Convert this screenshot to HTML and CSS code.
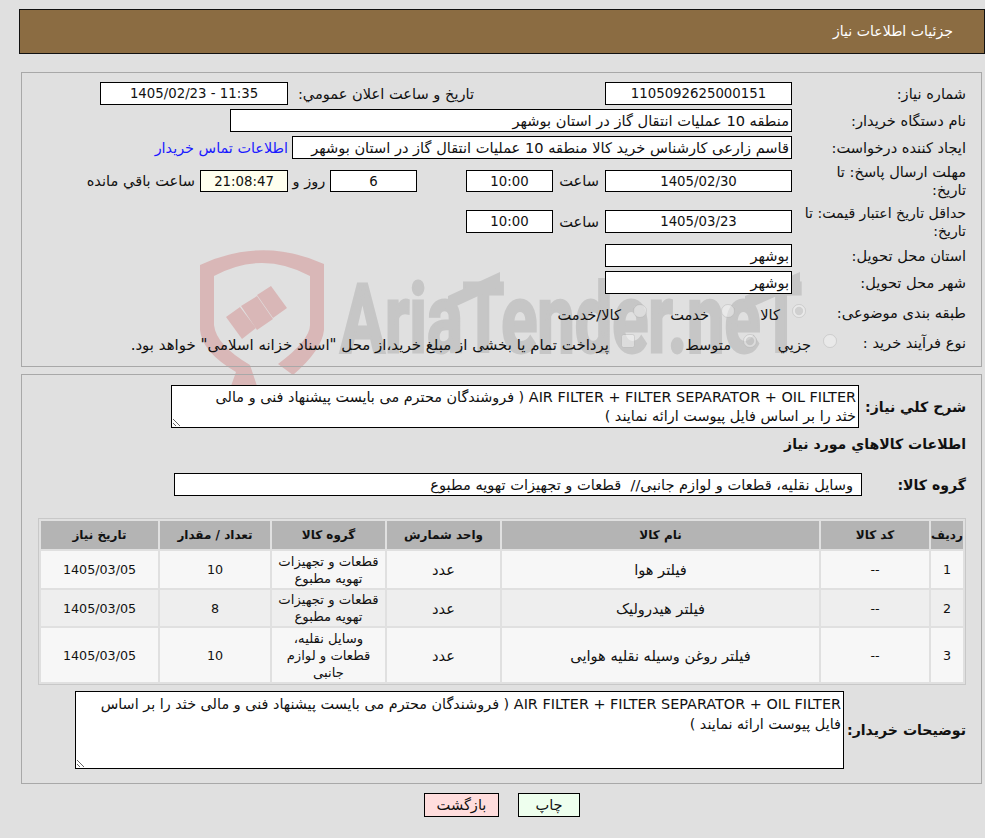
FILE: index.html
```html
<!DOCTYPE html>
<html lang="fa" dir="rtl">
<head>
<meta charset="utf-8">
<title>جزئیات اطلاعات نیاز</title>
<link rel="stylesheet" href="styles.css">
</head>
<body>
<div class="page">
  <svg class="watermark" width="985" height="420" viewBox="0 0 985 420" aria-hidden="true">
    <path class="wm-shield" fill-rule="evenodd" d="M200 265 Q262 236 324 264 L324 330 Q322 350 293 375 L278 364 Q310 340 310 325 L310 276 Q262 250 214 276 L214 325 Q216 345 250 365 L257 386 L231 386 L236 372 Q202 352 200 330 Z"/>
    <polygon class="wm-shield" points="226,317 240,307 256,328 242,339"/>
    <polygon class="wm-shield" points="241,306 257,296 273,319 257,330"/>
    <polygon class="wm-shield" points="257,295 271,286 287,308 273,318"/>
    <text class="wm-text" x="340" y="352" textLength="462" lengthAdjust="spacingAndGlyphs" direction="ltr">AriaTender.neT</text>
    <polygon class="wm-fill" points="448,296 500,272 500,286 448,310"/>
    <polygon class="wm-fill" points="745,296 800,272 800,286 745,310"/>
  </svg>

  <header class="title-bar">جزئیات اطلاعات نیاز</header>

  <section class="panel panel-info">
    <div class="row row-h23">
      <div class="label">شماره نیاز:</div>
      <div class="box box-main center num">1105092625000151</div>
      <div class="side-label w-announce">تاریخ و ساعت اعلان عمومي:</div>
      <div class="box box-announce center num ltr">1405/02/23 - 11:35</div>
    </div>
    <div class="row row-h23">
      <div class="label">نام دستگاه خریدار:</div>
      <div class="box box-buyer">منطقه 10 عملیات انتقال گاز در استان بوشهر</div>
    </div>
    <div class="row row-h23">
      <div class="label">ایجاد کننده درخواست:</div>
      <div class="box box-creator">قاسم زارعی کارشناس خرید کالا منطقه 10 عملیات انتقال گاز در استان بوشهر</div>
      <a class="contact" href="#">اطلاعات تماس خریدار</a>
    </div>
    <div class="row row-h36">
      <div class="label">مهلت ارسال پاسخ: تا تاریخ:</div>
      <div class="box box-main box-h22 center num">1405/02/30</div>
      <div class="hour-label">ساعت</div>
      <div class="box box-hour box-h22 center num">10:00</div>
      <div class="box box-days box-h22 center num">6</div>
      <div class="days-label">روز و</div>
      <div class="box box-timer box-h22 center num">21:08:47</div>
      <div class="remain-label">ساعت باقي مانده</div>
    </div>
    <div class="row row-h37">
      <div class="label label-tight">حداقل تاریخ اعتبار قیمت: تا تاریخ:</div>
      <div class="box box-main center num">1405/03/23</div>
      <div class="hour-label">ساعت</div>
      <div class="box box-hour center num">10:00</div>
    </div>
    <div class="row row-h23">
      <div class="label">استان محل تحویل:</div>
      <div class="box box-main">بوشهر</div>
    </div>
    <div class="row row-h23">
      <div class="label">شهر محل تحویل:</div>
      <div class="box box-main">بوشهر</div>
    </div>
    <div class="row row-h30">
      <div class="label label-cat">طبقه بندی موضوعی:</div>
      <label class="choice w71"><input type="radio" name="cat" disabled checked><span>کالا</span></label>
      <label class="choice w88"><input type="radio" name="cat" disabled><span>خدمت</span></label>
      <label class="choice"><input type="radio" name="cat" disabled><span>کالا/خدمت</span></label>
    </div>
    <div class="row row-h22">
      <div class="label label-proc">نوع فرآیند خرید :</div>
      <label class="choice w80"><input type="radio" name="proc" disabled><span>جزیي</span></label>
      <label class="choice w122"><input type="radio" name="proc" disabled checked><span>متوسط</span></label>
      <label class="choice"><input type="checkbox" disabled><span class="treasury">پرداخت تمام یا بخشی از مبلغ خرید،از محل "اسناد خزانه اسلامی" خواهد بود.</span></label>
    </div>
  </section>

  <section class="panel panel-goods">
    <div class="row">
      <div class="label-bold w107">شرح کلي نیاز:</div>
      <textarea class="note note-summary" readonly>AIR FILTER + FILTER SEPARATOR + OIL FILTER ( فروشندگان محترم می بایست پیشنهاد فنی و مالی خثد را بر اساس فایل پیوست ارائه نمایند )</textarea>
    </div>
    <h2 class="goods-title">اطلاعات کالاهاي مورد نیاز</h2>
    <div class="row group-row">
      <div class="label-bold w104">گروه کالا:</div>
      <div class="box box-group">وسایل نقلیه، قطعات و لوازم جانبی//&nbsp; قطعات و تجهیزات تهویه مطبوع</div>
    </div>
    <table class="goods">
      <thead>
        <tr>
          <th class="c-idx">ردیف</th><th class="c-code">کد کالا</th><th class="c-name">نام کالا</th><th class="c-unit">واحد شمارش</th><th class="c-group">گروه کالا</th><th class="c-qty">تعداد / مقدار</th><th>تاریخ نیاز</th>
        </tr>
      </thead>
      <tbody>
        <tr class="r1"><td class="d">1</td><td class="d">--</td><td>فیلتر هوا</td><td>عدد</td><td class="g">قطعات و تجهیزات تهویه مطبوع</td><td class="d">10</td><td class="d">1405/03/05</td></tr>
        <tr class="r2"><td class="d">2</td><td class="d">--</td><td>فیلتر هیدرولیک</td><td>عدد</td><td class="g">قطعات و تجهیزات تهویه مطبوع</td><td class="d">8</td><td class="d">1405/03/05</td></tr>
        <tr class="r3"><td class="d">3</td><td class="d">--</td><td>فیلتر روغن وسیله نقلیه هوایی</td><td>عدد</td><td class="g">وسایل نقلیه، قطعات و لوازم جانبی</td><td class="d">10</td><td class="d">1405/03/05</td></tr>
      </tbody>
    </table>
    <div class="row desc-row">
      <div class="label-bold w122">توضیحات خریدار:</div>
      <textarea class="note note-desc" readonly>AIR FILTER + FILTER SEPARATOR + OIL FILTER ( فروشندگان محترم می بایست پیشنهاد فنی و مالی خثد را بر اساس فایل پیوست ارائه نمایند )</textarea>
    </div>
  </section>

  <div class="actions">
    <button class="btn btn-print" type="button">چاپ</button>
    <button class="btn btn-back" type="button">بازگشت</button>
  </div>
</div>
</body>
</html>
```

FILE: styles.css
```css
* { box-sizing: border-box; }
html, body { margin: 0; padding: 0; background: #e0e0e0; }
body {
  font-family: "DejaVu Sans", "Liberation Sans", sans-serif;
  font-size: 14.6px;
  line-height: 18px;
  color: #111;
}
.page { position: relative; width: 985px; height: 838px; padding-top: 9px; overflow: hidden; }
.watermark { position: absolute; left: 0; top: 0; z-index: 0; direction: ltr; }
.wm-shield { fill: #d9b7b7; }
.wm-fill { fill: #c6c6c6; }
.wm-text { fill: #c6c6c6; stroke: #c6c6c6; stroke-width: 3px; font-family: Roboto, "Liberation Sans", sans-serif; font-weight: 700; font-size: 96px; }

.title-bar {
  position: relative; z-index: 1;
  margin-left: 19px; height: 45px;
  background: #8b6c42; border: 1px solid #111;
  color: #fff; padding: 0 31px; line-height: 43px; font-size: 14.1px;
}
.panel { position: relative; z-index: 1; margin-left: 21px; margin-right: 3px; width: 961px; border: 1px solid #a8a8a8; }
.panel-info { margin-top: 18px; height: 295px; padding: 9px 15px 0 0; display: flex; flex-direction: column; gap: 4px; }
.panel-goods { margin-top: 7px; height: 410px; padding: 10px 15px 0 15px; }

.row { display: flex; align-items: center; }
.row-h23 { height: 23px; }
.row-h22 { height: 22px; }
.row-h36 { height: 36px; }
.row-h37 { height: 37px; }
.row-h30 { height: 30px; }
.label { width: 174px; flex: none; padding-left: 8px; }
.label-tight { font-size: 14.1px; }
.label-cat { width: 160px; padding-left: 0; }
.label-proc { width: 129px; padding-left: 0; }
.box {
  height: 23px; background: #fff; border: 1px solid #000;
  padding: 0 2px; line-height: 22px; white-space: nowrap; overflow: hidden; flex: none;
}
.box-h22 { height: 22px; line-height: 21px; }
.center { text-align: center; }
.num { font-size: 13.3px; }
.ltr { direction: ltr; }
.box-main { width: 187px; }
.box-buyer { width: 562px; }
.box-creator { width: 500px; }
.box-announce { width: 188px; }
.w-announce { width: 317px; padding-right: 131px; padding-left: 0; flex: none; white-space: nowrap; }
.contact { color: #1a1aff; text-decoration: none; margin-right: 4px; white-space: nowrap; font-size: 14.4px; }
.hour-label { width: 52px; text-align: center; flex: none; }
.box-hour { width: 87px; }
.box-days { width: 87px; margin-right: 49px; }
.days-label { width: 42px; text-align: center; flex: none; }
.box-timer { width: 88px; background: #ffffee; }
.remain-label { margin-right: 5px; white-space: nowrap; }

.choice { display: flex; align-items: center; flex: none; white-space: nowrap; }
.choice input { margin: 0; width: 14px; height: 14px; flex: none; opacity: .7; transform: translateY(-2px); }
.choice span { margin-right: 12px; padding-top: 3px; }
.choice .treasury { font-size: 15px; }
.w71 { width: 71px; }
.w88 { width: 88px; }
.w80 { width: 80px; }
.w122 { width: 122px; }

.label-bold { font-weight: 700; flex: none; white-space: nowrap; font-size: 14.1px; }
.w107 { width: 107px; }
.w104 { width: 104px; }
.w122.label-bold { width: 122px; }
.note {
  display: block; flex: none; background: #fff; border: 1.5px solid #000;
  padding: 2px; margin: 0; font: inherit; font-size: 14.4px; color: #111; overflow: hidden; resize: both;
  border-radius: 0; outline: none; direction: rtl;
}
.note-summary { width: 688px; height: 43px; line-height: 19px; padding-left: 30px; }
.note-desc { width: 769px; height: 78px; line-height: 20px; }
.goods-title { margin: 6px 0 0; font-size: 14.1px; line-height: 20px; font-weight: 700; }
.group-row { margin-top: 19px; }
.box-group { width: 688px; height: 23px; padding-right: 8px; }

.goods {
  width: 928px; margin: 22px 0 0 0; border-collapse: separate; border-spacing: 2px;
  border: 1px solid #c8c8c8; table-layout: fixed; text-align: center;
}
.goods th { background: #b4b4b4; height: 28px; padding: 0; font-weight: 700; font-size: 12px; }
.goods td { padding: 0 6px; background: #f7f7f7; }
.goods td.d { font-size: 12.7px; }
.goods td.g { font-size: 13.2px; }
.goods .r1 td { height: 37px; line-height: 17px; }
.goods .r2 td { height: 36px; background: #eeeeee; line-height: 17px; }
.goods .r3 td { height: 54px; line-height: 17px; }
.c-idx { width: 32px; }
.c-code { width: 108px; }
.c-name { width: 317px; }
.c-unit { width: 113px; }
.c-group { width: 113px; }
.c-qty { width: 110px; }

.desc-row { margin-top: 6px; }

.actions { position: relative; z-index: 1; display: flex; justify-content: center; gap: 19px; margin-top: 9px; padding-left: 19px; direction: ltr; flex-direction: row-reverse; }
.btn { height: 24px; border: 1px solid #000; font: inherit; color: #111; padding: 0; border-radius: 0; }
.btn-print { width: 62px; background: #eeffee; }
.btn-back { width: 75px; background: #ffdddd; }
```
